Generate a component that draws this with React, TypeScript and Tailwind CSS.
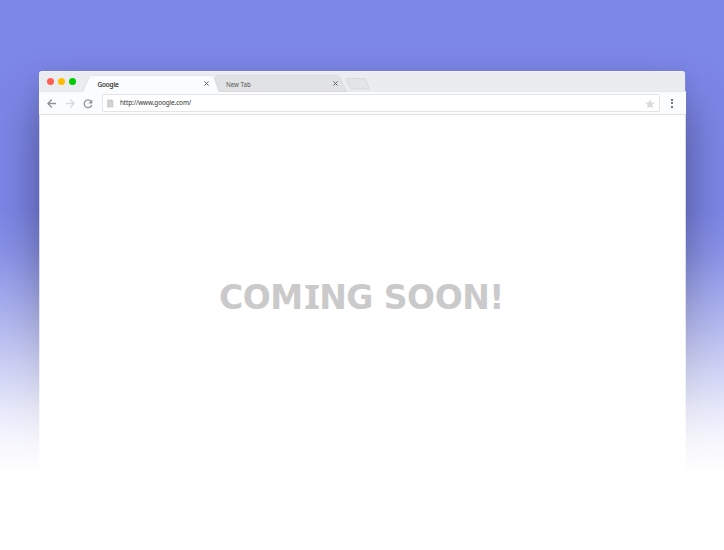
function TabStrip() {
  return (
    <div className="mr-px flex h-5 rounded-t-[3px] border-t border-[#f2f3f6] bg-[#ebecf0]">
      <div className="flex w-[43px] shrink-0 gap-1 pt-[6px] pl-2">
        <span className="h-[7px] w-[7px] rounded-full bg-[#ff5f52]" />
        <span className="h-[7px] w-[7px] rounded-full bg-[#ffbd00]" />
        <span className="h-[7px] w-[7px] rounded-full bg-[#00ca00]" />
      </div>
      <div className="z-10 grid h-5 w-[138px] shrink-0">
        <svg className="[grid-area:1/1]" width="138" height="21" viewBox="0 0 138 21" fill="none">
          <path d="M0 20.5 C2 20 2 18 3 15 L7 6 Q8 3.5 10 3.5 H129 Q131 3.5 132 6 L137 20.5Z" fill="#fbfcfe" />
          <path d="M0 19.5 C2 19 2 17 3 14 L7 6 Q8 3.5 10 3.5 H129 Q131 3.5 132 6 L137 19.5" stroke="#dedfe2" strokeWidth=".8" />
        </svg>
        <div className="flex items-center justify-between pt-[5px] pr-[11px] pl-[15.5px] font-['Noto_Sans',sans-serif] text-[6.4px] leading-[10px] text-[#222] [grid-area:1/1]">
          <span className="tracking-[-0.1px] [-webkit-text-stroke:0.15px_#222]">Google</span>
          <Close />
        </div>
      </div>
      <div className="-ml-[5px] grid h-5 w-[133px] shrink-0">
        <svg className="[grid-area:1/1]" width="133" height="20" viewBox="0 0 133 20" fill="none">
          <path d="M4 19.5 L0 6 Q1 3.5 3 3.5 H122 Q124 3.5 125 6 L131 19.5Z" fill="#e1e2e4" stroke="#d2d3d5" strokeWidth=".7" />
        </svg>
        <div className="flex items-center justify-between pt-[5px] pr-[10px] pl-[11px] font-['Noto_Sans',sans-serif] text-[6.2px] leading-[10px] text-[#555] [grid-area:1/1]">
          <span>New Tab</span>
          <Close />
        </div>
      </div>
      <svg className="-ml-[3.5px] mt-[5px]" width="26" height="13" viewBox="0 0 26 13" fill="none">
        <path d="M2.2 1.5H18.5Q20 1.5 20.7 3L24 10.5Q24.5 12 23 12H7.5Q6 12 5.3 10.5L1.2 3Q.7 1.5 2.2 1.5Z" fill="#e4e5e7" stroke="#d3d4d6" strokeWidth=".8" />
      </svg>
    </div>
  );
}

function Close() {
  return (
    <svg className="-mt-[3px]" width="5" height="5" viewBox="0 0 5 5" fill="none" stroke="#555" strokeWidth=".9">
      <path d="M.4.4 4.6 4.6M4.6.4.4 4.6" />
    </svg>
  );
}

function Toolbar() {
  return (
    <div className="flex h-6 items-center border-t border-b border-t-[#e6e7ea] border-b-[#e2e2e3] bg-[#fbfcfe] pl-2">
      <svg width="9" height="9" viewBox="0 0 9 9" fill="none" stroke="#929292" strokeWidth="1.3">
        <path d="M9 4.5H1M4.8.5 .9 4.5 4.8 8.5" />
      </svg>
      <svg className="ml-[10px]" width="9" height="9" viewBox="0 0 9 9" fill="none" stroke="#dadada" strokeWidth="1.3">
        <path d="M0 4.5H8M4.2.5 8.1 4.5 4.2 8.5" />
      </svg>
      <svg className="mt-px ml-[8px]" width="10" height="10" viewBox="0 0 10 10" fill="none">
        <path d="M8 2.2A3.9 3.9 0 1 0 8.8 6" stroke="#929292" strokeWidth="1.3" />
        <path d="M9.3.6V4.5H5.4Z" fill="#929292" />
      </svg>
      <div className="ml-[9px] flex h-[18px] w-[558px] items-center rounded-[1px] border border-[#e4e4e6] bg-white pr-1 pl-[4px]">
        <svg className="mt-[1px]" width="7" height="9" viewBox="0 0 7 9">
          <path d="M0 .5H4.5L6.5 2.5V8.5H0Z" fill="#d2d2d2" />
          <path d="M4.5.5V2.5H6.5Z" fill="#b9b9b9" />
        </svg>
        <span className="-mt-px ml-[6px] font-['Noto_Sans',sans-serif] text-[6.5px] leading-[10px] tracking-[-0.16px] text-[#333]">http://www.google.com/</span>
        <svg className="mt-px ml-auto" width="10" height="10" viewBox="0 0 10 10" fill="#d9dadc">
          <path d="M5 .2 6.4 3.5 9.9 3.8 7.2 6.1 8 9.6 5 7.7 2 9.6 2.8 6.1 .1 3.8 3.6 3.5Z" />
        </svg>
      </div>
      <div className="ml-[11px] flex flex-col gap-[1.5px]">
        <span className="h-[2px] w-[2px] bg-[#777]" />
        <span className="h-[2px] w-[2px] bg-[#777]" />
        <span className="h-[2px] w-[2px] bg-[#777]" />
      </div>
    </div>
  );
}

export default function App() {
  return (
    <div className="relative h-[550px] w-[724px] overflow-hidden bg-[#7d87e8] pt-[71px] pl-[39px]">
      <div className="w-[647px] rounded-t-[3px] shadow-[0_30px_50px_rgba(0,0,0,0.36),0_2px_20px_rgba(0,0,0,0.06)]">
        <TabStrip />
        <Toolbar />
        <div className="flex h-[365px] border-x border-[#d5d7ea] bg-white pt-[159px] pl-[179px]">
          <h1 className="relative z-10 font-['DejaVu_Sans',sans-serif] text-[33px] leading-[48px] font-bold tracking-[-0.5px] whitespace-nowrap text-[#cacaca]">
            COM<span className="inline-block w-[16.5px] origin-left scale-x-[1.2] pl-px font-['Noto_Sans',sans-serif] text-[33.7px] leading-none">I</span>NG SOON!
          </h1>
        </div>
      </div>
      <div className="pointer-events-none absolute inset-x-0 top-[210px] bottom-0 bg-[linear-gradient(to_bottom,rgba(255,255,255,0)_0px,rgba(255,255,255,0.09)_40px,rgba(255,255,255,0.26)_80px,rgba(255,255,255,0.44)_120px,rgba(255,255,255,0.63)_160px,rgba(255,255,255,0.82)_200px,rgba(255,255,255,0.93)_230px,rgba(255,255,255,1)_262px)]" />
    </div>
  );
}
